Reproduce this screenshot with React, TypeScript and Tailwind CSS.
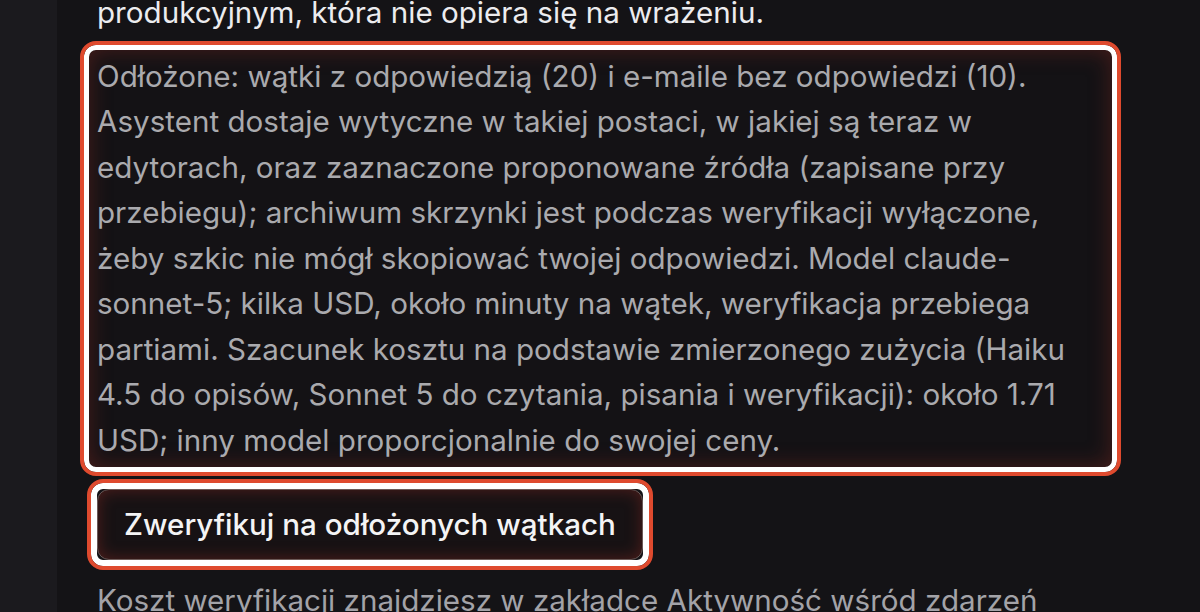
import React from 'react';

export default function App() {
  return (
    <div
      className="flex h-[612px] w-full overflow-hidden bg-[#141316]"
      style={{ fontFamily: 'Inter, "Noto Sans", sans-serif' }}
    >
      {/* lewy pasek */}
      <div className="w-[57px] shrink-0 bg-[#1b1a1e]" />

      <div className="flex-1 pl-[40px]">
        <div className="flex w-[1007px] flex-col items-start text-[29.6px] leading-[45.5px]">
          <p className="-mt-[10px] text-[#ececef]">
            produkcyjnym, która nie opiera się na wrażeniu.
          </p>

          {/* podświetlony opis */}
          <div className="-mx-[13px] mt-[9px] w-[1033px] rounded-[12px] border-[5px] border-white bg-[#141215] px-[8px] py-[4px] shadow-[inset_0_0_22px_rgba(150,45,35,0.4)] outline-4 outline-[#df4a2e]">
            <p className="text-[#aaaaae]">
              Odłożone: wątki z odpowiedzią (20) i e-maile bez odpowiedzi (10). Asystent dostaje
              wytyczne w takiej postaci, w jakiej są teraz w edytorach, oraz zaznaczone
              proponowane źródła (zapisane przy przebiegu); archiwum skrzynki jest podczas
              weryfikacji wyłączone, żeby szkic nie mógł skopiować twojej odpowiedzi. Model
              claude-sonnet-5; kilka USD, około minuty na wątek, weryfikacja przebiega partiami.
              Szacunek kosztu na podstawie zmierzonego zużycia (Haiku 4.5 do opisów, Sonnet 5 do
              czytania, pisania i weryfikacji): około 1.71 USD; inny model proporcjonalnie do
              swojej ceny.
            </p>
          </div>

          {/* podświetlony przycisk */}
          <div className="-ml-[6px] mt-[11px] rounded-[12px] border-[6px] border-white bg-[#141316] outline-4 outline-[#df4a2e]">
            <button className="flex h-[71px] items-center rounded-[12px] border border-[#6b5a58] bg-[#171214] px-[26px] text-[29.6px] font-medium text-[#f4f4f5] shadow-[inset_0_0_16px_rgba(150,45,35,0.45)]">
              Zweryfikuj na odłożonych wątkach
            </button>
          </div>

          <p className="mt-[12px] text-[#a3a3a8]">
            Koszt weryfikacji znajdziesz w zakładce Aktywność wśród zdarzeń
          </p>
        </div>
      </div>
    </div>
  );
}
